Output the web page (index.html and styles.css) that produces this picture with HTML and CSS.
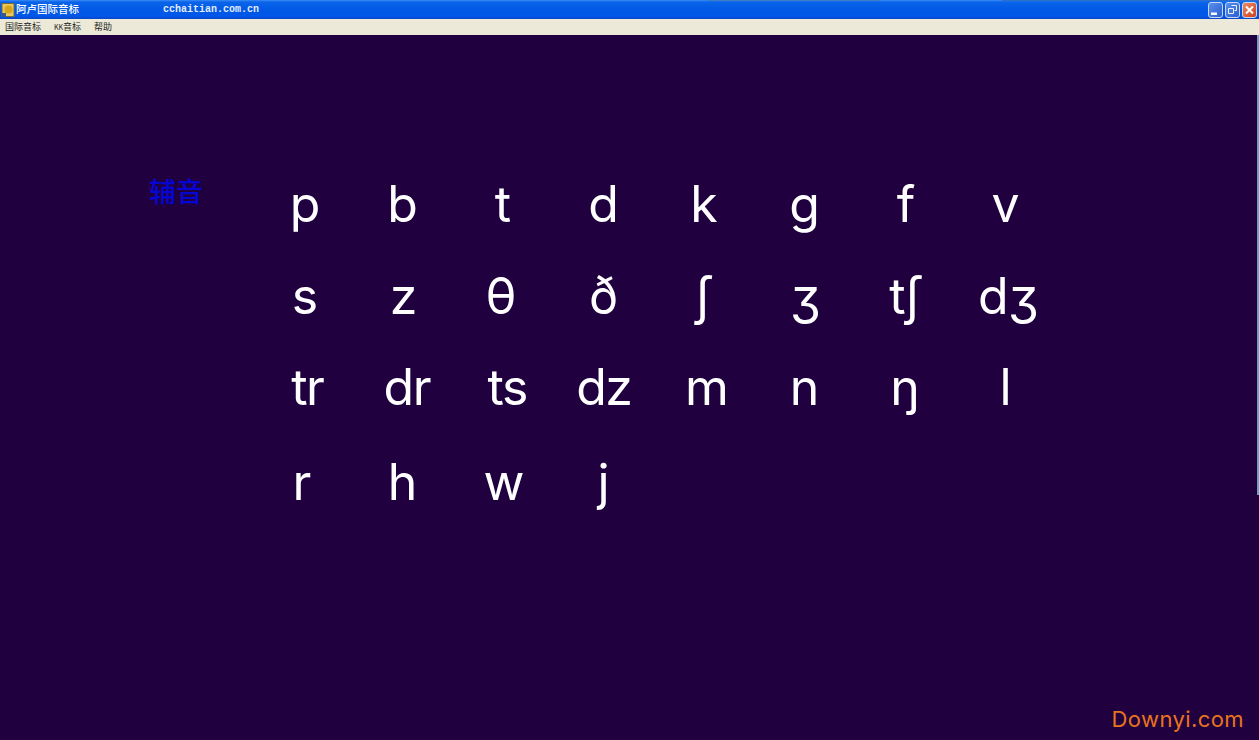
FILE: index.html
```html
<!DOCTYPE HTML>
<html lang="en">
<head>
    <meta charset="UTF-8">
    <title>阿卢国际音标</title>
    <link rel="stylesheet" href="styles.css">
</head>
<body>
    <div id="wrapper">
        <div class="titlebar">
            <svg class="app-icon" width="14" height="14" viewBox="0 0 14 14">
                <rect x="1" y="0.5" width="12" height="13" fill="#e8c860" stroke="#7a6a30"/>
                <circle cx="7.5" cy="6.5" r="4" fill="#d8a418"/>
                <rect x="0" y="10" width="5" height="4" fill="#3a5a8c"/>
            </svg>
            <span class="app-name">阿卢国际音标</span>
            <span class="app-site">cchaitian.com.cn</span>
            <div class="win-btns">
                <a class="win-btn" href="javascript:;">
                    <svg width="15" height="16" viewBox="0 0 15 16"><rect x="3" y="10.5" width="6" height="2.5" fill="#fff"/></svg>
                </a>
                <a class="win-btn" href="javascript:;">
                    <svg width="15" height="16" viewBox="0 0 15 16"><path d="M6.5 3.5h5v5h-2M3.5 6.5h5v5h-5z" fill="none" stroke="#e8eefc"/></svg>
                </a>
                <a class="win-btn win-close" href="javascript:;">
                    <svg width="15" height="16" viewBox="0 0 15 16"><path d="M4 4.5l7 7M11 4.5l-7 7" stroke="#fff" stroke-width="2"/></svg>
                </a>
            </div>
        </div>
        <div class="menubar">
            <a href="#">国际音标</a>
            <a href="#"><span class="kk">KK</span>音标</a>
            <a href="#">帮助</a>
        </div>
        <div class="stage">
            <h2 class="label">辅音</h2>
            <ul class="symbols">
                <li>p</li><li class="l3">b</li><li class="l3">t</li><li class="l3">d</li><li class="l3">k</li><li class="l3">ɡ</li><li class="l2">f</li><li class="l3">v</li>
                <li>s</li><li class="l2">z</li><li class="l6">θ</li><li class="l3">ð</li><li class="l3">ʃ</li><li class="l2">ʒ</li><li class="l2">tʃ</li><li>dʒ</li>
                <li class="r3">tr</li><li class="r2">dr</li><li class="r2">ts</li><li class="l2">dz</li><li>m</li><li class="l3">n</li><li class="l3">ŋ</li><li class="l3">l</li>
                <li class="l3">r</li><li class="l3">h</li><li class="l2">w</li><li class="l3">j</li>
            </ul>
            <div class="edge"></div>
            <div class="mark">Downyi.com</div>
        </div>
    </div>
</body>
</html>
```

FILE: styles.css
```css
html,
body {
    margin: 0;
    padding: 0;
    height: 100%;
    overflow: hidden;
}
#wrapper {
    display: flex;
    flex-direction: column;
    height: 740px;
}
.titlebar {
    display: flex;
    align-items: center;
    height: 19px;
    flex: none;
    padding-left: 1px;
    background:
        linear-gradient(#3d7cc4, #3d7cc4) 708px 0 / 172px 1px no-repeat,
        linear-gradient(#2c6fc8, #2c6fc8) 1002px 0 / 257px 1px no-repeat,
        linear-gradient(#3a8cf4 0, #0a64ea 2px, #0058e4 10px, #0157ea 16px, #0a46c8 19px);
    color: #fff;
    font-family: "Noto Sans CJK SC", sans-serif;
    font-size: 10.5px;
    line-height: 17px;
}
.app-icon {
    flex: none;
}
.app-name {
    width: 147px;
    margin-left: 1px;
    margin-bottom: 2px;
    font-weight: 500;
}
.app-site {
    font-family: "Liberation Mono", monospace;
    font-size: 10px;
    font-weight: bold;
    color: #e4ecff;
}
.win-btns {
    display: flex;
    gap: 2px;
    margin-left: auto;
    margin-right: 2px;
}
.win-btn {
    display: block;
    width: 15px;
    height: 16px;
    box-sizing: border-box;
    border: 1px solid #c8d8f4;
    border-radius: 3px;
    background: linear-gradient(135deg, #5a90ec, #2a5ed0);
}
.win-btn svg {
    display: block;
    margin: -1px;
}
.win-close {
    background: linear-gradient(135deg, #ea8c64, #cf3f1c);
}
.menubar {
    display: flex;
    gap: 13px;
    align-items: flex-start;
    height: 16px;
    flex: none;
    padding-left: 5px;
    background: #ece9d8;
    font-family: "Noto Sans CJK SC", sans-serif;
    font-size: 9px;
    line-height: 15px;
}
.menubar a {
    color: #222;
    text-decoration: none;
}
.kk {
    font-size: 7px;
}
.stage {
    position: relative;
    flex: 1;
    display: flex;
    background: #20003f;
    padding: 138px 0 0 149px;
}
.label {
    margin: 0;
    width: 105px;
    flex: none;
    color: #0606d4;
    font-family: "Noto Sans CJK SC", sans-serif;
    font-size: 27px;
    font-weight: 500;
    line-height: 36px;
}
.symbols {
    list-style-type: none;
    margin: 1px 0 0;
    padding: 0;
    display: grid;
    grid-template-columns: repeat(8, 100.5px);
    grid-template-rows: 92px 91px 95px 60px;
    height: 338px;
    color: #fff;
    font-family: "Inter", sans-serif;
    font-size: 50px;
    letter-spacing: -1.5px;
    line-height: 60px;
    text-align: center;
}
/* nudges, the glyphs are not centred in their cells */
.l2 {
    padding-right: 4px;
}
.l3 {
    padding-right: 6px;
}
.l6 {
    padding-right: 10px;
}
.r2 {
    padding-left: 4px;
}
.r3 {
    padding-left: 6px;
}
.edge {
    position: absolute;
    right: 0;
    top: 0;
    width: 2px;
    height: 460px;
    background: #6aa0cc;
}
.mark {
    position: absolute;
    right: 15px;
    bottom: 8px;
    color: #e8741c;
    font-family: "Inter", sans-serif;
    font-size: 22px;
    letter-spacing: .4px;
}
```
